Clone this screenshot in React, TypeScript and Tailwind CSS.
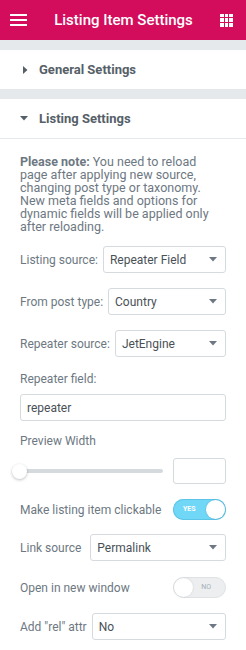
import React from 'react';

const Caret: React.FC = () => (
  <svg width="8" height="5" viewBox="0 0 8 5" className="shrink-0">
    <path d="M0 0h8L4 4.5z" fill="#6d7882" />
  </svg>
);

const Select: React.FC<{ value: string; className?: string }> = ({ value, className = '' }) => (
  <div className={`flex h-[27px] items-center justify-between rounded-[3px] border border-[#d5dadf] bg-white pl-[6px] pr-[8px] ${className}`}>
    <span className="text-[12px] text-[#495157]">{value}</span>
    <Caret />
  </div>
);

const SelectRow: React.FC<{ label: string; value: string }> = ({ label, value }) => (
  <div className="flex items-center">
    <span className="mr-[5px] whitespace-nowrap text-[12px] text-[#6d7882]">{label}</span>
    <Select value={value} className="flex-1" />
  </div>
);

const Toggle: React.FC<{ on: boolean }> = ({ on }) =>
  on ? (
    <div className="flex h-[21px] w-[53px] shrink-0 items-center justify-between rounded-full bg-[#71d7f7] pl-[10px] pr-[1px] shadow-[inset_0_0_0_1px_#5cc5e8]">
      <span className="text-[7px] font-bold text-white">YES</span>
      <span className="h-[19px] w-[19px] rounded-full bg-white shadow-[0_0_2px_rgba(0,0,0,0.2)]" />
    </div>
  ) : (
    <div className="flex h-[21px] w-[53px] shrink-0 items-center justify-between rounded-full border border-[#dfe2e5] bg-[#eceef0] pl-0 pr-[14px]">
      <span className="h-[19px] w-[19px] rounded-full bg-white shadow-[0_0_2px_rgba(0,0,0,0.15)]" />
      <span className="text-[7px] text-[#a4afb7]">NO</span>
    </div>
  );

export default function App() {
  return (
    <div className="h-[650px] w-[246px] overflow-hidden bg-[#e6e9ec] font-['Roboto',sans-serif]">
      {/* Header */}
      <div className="flex h-10 items-center justify-between bg-[#d30c5c] pl-[10px] pr-[13px]">
        <div className="flex h-[12px] w-[17px] flex-col justify-between">
          <span className="h-[2px] bg-white" />
          <span className="h-[2px] bg-white" />
          <span className="h-[2px] bg-white" />
        </div>
        <span className="text-[15px] font-medium text-white">Listing Item Settings</span>
        <div className="grid h-[13px] w-[13px] grid-cols-3 gap-[1px]">
          {Array.from({ length: 9 }).map((_, i) => (
            <span key={i} className="bg-white" />
          ))}
        </div>
      </div>

      {/* General Settings */}
      <div className="mt-[10px] flex h-[39px] items-center bg-white pl-[23px]">
        <svg width="5" height="8" viewBox="0 0 5 8" className="mr-[11px]">
          <path d="M0 0v8l4.5-4z" fill="#556068" />
        </svg>
        <span className="text-[13px] font-bold text-[#556068]">General Settings</span>
      </div>

      {/* Listing Settings */}
      <div className="mt-[10px] bg-white">
        <div className="flex h-[40px] items-center border-b border-[#e6e9ec] pl-[20px]">
          <svg width="8" height="5" viewBox="0 0 8 5" className="mr-[11px]">
            <path d="M0 0h8L4 4.5z" fill="#556068" />
          </svg>
          <span className="text-[13px] font-bold text-[#556068]">Listing Settings</span>
        </div>

        <div className="flex flex-col px-[20px] pb-[10px] pt-[16px]">
          <p className="text-[12.5px] leading-[13px] text-[#6d7882]">
            <b>Please note:</b> You need to reload
            <br />
            page after applying new source,
            <br />
            changing post type or taxonomy.
            <br />
            New meta fields and options for
            <br />
            dynamic fields will be applied only
            <br />
            after reloading.
          </p>

          <div className="mt-[13px] flex flex-col gap-[15px]">
            <SelectRow label="Listing source:" value="Repeater Field" />
            <SelectRow label="From post type:" value="Country" />
            <SelectRow label="Repeater source:" value="JetEngine" />
          </div>

          <span className="mt-[13px] text-[12px] text-[#6d7882]">Repeater field:</span>
          <div className="mt-[6px] flex h-[27px] items-center rounded-[3px] border border-[#d5dadf] pl-[6px]">
            <span className="text-[12px] text-[#495157]">repeater</span>
          </div>

          <span className="mt-[11px] text-[12px] text-[#6d7882]">Preview Width</span>
          <div className="mt-[8px] flex items-center">
            <div className="relative -ml-[8px] flex h-[15px] flex-1 items-center">
              <div className="ml-[8px] h-[4px] flex-1 rounded-full bg-[#d5dadf]" />
              <span className="absolute left-0 top-0 h-[15px] w-[15px] rounded-full bg-white shadow-[0_1px_3px_rgba(0,0,0,0.25)]" />
            </div>
            <div className="ml-[10px] h-[26px] w-[53px] rounded-[3px] border border-[#d5dadf]" />
          </div>

          <div className="mt-[15px] flex items-center justify-between">
            <span className="text-[12px] text-[#6d7882]">Make listing item clickable</span>
            <Toggle on />
          </div>

          <div className="mt-[14px] flex items-center">
            <span className="mr-[9px] whitespace-nowrap text-[12px] text-[#6d7882]">Link source</span>
            <Select value="Permalink" className="flex-1" />
          </div>

          <div className="mt-[16px] flex items-center justify-between">
            <span className="text-[12px] text-[#6d7882]">Open in new window</span>
            <Toggle on={false} />
          </div>

          <div className="mt-[15px] flex items-center">
            <span className="mr-[5px] whitespace-nowrap text-[12px] text-[#6d7882]">Add "rel" attr</span>
            <Select value="No" className="flex-1" />
          </div>
        </div>
      </div>
    </div>
  );
}
